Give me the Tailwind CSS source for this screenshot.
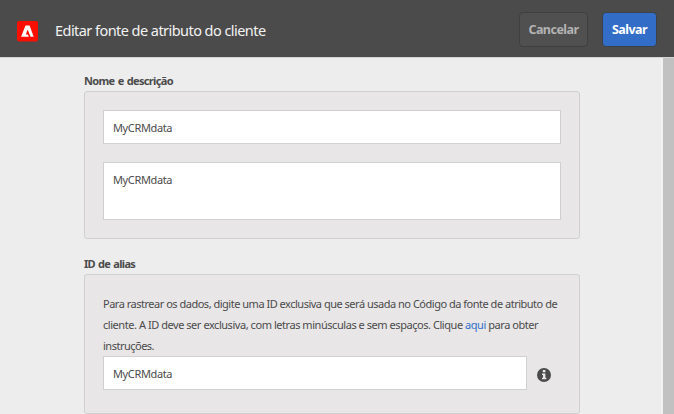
<!DOCTYPE html>
<html lang="pt-BR">
<head>
<meta charset="utf-8">
<title>Editar fonte de atributo do cliente</title>
<script src="https://cdn.jsdelivr.net/npm/@tailwindcss/browser@4"></script>
</head>
<body class="flex h-[414px] w-[674px] flex-col overflow-hidden bg-[#ededed] font-['Noto_Sans',sans-serif] text-[11px] text-[#4b4b4b]">
<header class="flex h-[58px] shrink-0 items-center border-b border-[#d6d3d4] bg-[#4b4b4b] pt-[1px] pr-[17px] pl-[17px]">
  <svg class="mt-[4px] h-[21px] w-[21px]" viewBox="0 0 21 21"><rect width="21" height="20.5" rx="2" fill="#fa0f00"/><path d="M8.5 4.6h4.1l4.1 11.2h-3.2l-2.8-7.4-1.9 5h2.1l.9 2.1-.3.3H4.1z" fill="#fff"/></svg>
  <h1 class="mt-[3px] ml-[17px] whitespace-nowrap text-[14.5px] tracking-[-0.55px] text-[#f2f2f2]">Editar fonte de atributo do cliente</h1>
  <div class="ml-auto flex gap-[14px] text-[12.5px] font-bold whitespace-nowrap">
    <button class="h-[35px] w-[69px] rounded-[4px] border border-[#3f3f3f] bg-[#505050] pt-[2px] tracking-[-0.52px] text-[#b3b3b3]">Cancelar</button>
    <button class="h-[35px] w-[55px] rounded-[4px] border border-[#3c4149] bg-[#326ec8] pt-[2px] tracking-[-0.52px] text-white">Salvar</button>
  </div>
</header>
<div class="flex min-h-0 flex-1">
  <main class="flex-1 pt-[14px] pl-[84px]">
    <h2 class="h-[19px] leading-[17px] font-bold tracking-[-0.66px] [word-spacing:1px]">Nome e descrição</h2>
    <section class="flex h-[148px] w-[496px] flex-col gap-[18px] rounded-[3px] border border-[#d0d0d0] bg-[#e8e6e7] px-[18px] pt-[18px]">
      <div class="h-[34px] border border-[#d0d0d0] bg-white px-[9px] leading-[34px] tracking-[-0.37px]">MyCRMdata</div>
      <div class="h-[58px] border border-[#d0d0d0] bg-white px-[9px] leading-[34px] tracking-[-0.37px]">MyCRMdata</div>
    </section>
    <h2 class="mt-[16px] h-[19px] leading-[17px] font-bold tracking-[-0.7px] [word-spacing:1px]">ID de alias</h2>
    <section class="h-[140px] w-[496px] rounded-[3px] border border-[#d0d0d0] bg-[#e8e6e7] px-[18px] pt-[18px]">
      <p class="leading-[21px] whitespace-nowrap"><span class="tracking-[-0.49px]">Para rastrear os dados, digite uma ID exclusiva que será usada no Código da fonte de atributo de</span><br><span class="tracking-[-0.45px]">cliente. A ID deve ser exclusiva, com letras minúsculas e sem espaços. Clique <a class="text-[#326ec8]">aqui</a> para obter</span><br><span class="tracking-[-0.5px]">instruções.</span></p>
      <div class="flex items-center gap-[10px]">
        <div class="h-[34px] w-[424px] border border-[#d0d0d0] bg-white px-[9px] leading-[34px] tracking-[-0.37px]">MyCRMdata</div>
        <svg class="mt-[4px] h-[14px] w-[14px]" viewBox="0 0 14 14"><circle cx="7" cy="7" r="7" fill="#4b4b4b"/><path d="M5.8 2h2.6v2.2H5.8zM5 5.4h3.4v4.4h.9v1.5H5V9.8h1V6.9H5z" fill="#e8e6e7"/></svg>
      </div>
    </section>
  </main>
  <div class="w-[13px] border-l-2 border-[#f1f1f1] bg-[#c1c1c1]"></div>
</div>
</body>
</html>
